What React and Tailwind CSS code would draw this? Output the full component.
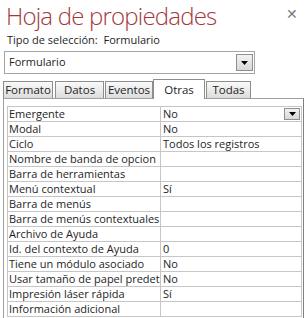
import React from "react";

const rows = [
  ["Emergente", "No", true],
  ["Modal", "No"],
  ["Ciclo", "Todos los registros"],
  ["Nombre de banda de opcion", ""],
  ["Barra de herramientas", ""],
  ["Menú contextual", "Sí"],
  ["Barra de menús", ""],
  ["Barra de menús contextuales", ""],
  ["Archivo de Ayuda", ""],
  ["Id. del contexto de Ayuda", "0"],
  ["Tiene un módulo asociado", "No"],
  ["Usar tamaño de papel predet", "No"],
  ["Impresión láser rápida", "Sí"],
  ["Información adicional", ""],
];

const tabs = [
  ["Formato", "w-[50px]"],
  ["Datos", "w-[49px] ml-[2px]"],
  ["Eventos", "w-[48px] ml-[1px]"],
  ["Otras", "w-[52px]", true],
  ["Todas", "w-[45px] ml-[1px]"],
];

function DropButton({ className }) {
  return (
    <div
      className={
        "flex items-center justify-center border border-[#8e8f8f] bg-gradient-to-b from-[#f2f2f2] to-[#d8d8d8] " +
        className
      }
    >
      <svg width="7" height="4" viewBox="0 0 7 4">
        <path d="M0 0h7L3.5 4z" fill="#000" />
      </svg>
    </div>
  );
}

export default function App() {
  return (
    <div className="w-[307px] h-[318px] bg-white overflow-hidden font-['Open_Sans',sans-serif] text-[#1e1e1e]">
      <div className="flex items-start justify-between pl-[6px] pr-[9px] h-[32px]">
        <h1 className="text-[24px] font-light leading-[32px] text-[#a4373a] tracking-[-0.8px]">
          Hoja de propiedades
        </h1>
        <span className="text-[#7a7a7a] text-[14px] leading-none mt-[7px]">✕</span>
      </div>
      <div className="pl-[7px] text-[11px] leading-[16px] h-[17px]">
        Tipo de selección:&nbsp;&nbsp;Formulario
      </div>
      <div className="ml-[4px] mt-[2px] w-[251px] h-[23px] border border-[#a5a5a5] flex items-center justify-between pl-[4px] pr-[1px]">
        <span className="text-[11px]">Formulario</span>
        <DropButton className="w-[17px] h-[17px]" />
      </div>
      <div className="flex items-end ml-[3px] mt-[5px] h-[19px]">
        {tabs.map(([t, w, sel]) => (
          <div
            key={t}
            className={
              w +
              " text-[11.5px] flex justify-center border border-[#8d8d8d] " +
              (sel
                ? "h-[20px] bg-white border-b-0 relative z-10 -mb-px items-start pt-px"
                : "h-[17px] bg-gradient-to-b from-[#fafafa] to-[#dcdcdc] items-center border-b-0")
            }
          >
            {t}
          </div>
        ))}
      </div>
      <div className="ml-[3px] w-[301px] h-[230px] border border-[#a0a0a0] border-r-[#7f7f7f] pt-[7px] pl-[3px]">
        <div className="w-[295px] border border-[#c6c6c6] border-b-0">
          {rows.map(([label, value, drop]) => (
            <div key={label} className="flex h-[15px] border-b border-[#c6c6c6] text-[11px] leading-[14px]">
              <div className="w-[153px] pl-[1px] border-r border-[#c6c6c6] overflow-hidden whitespace-nowrap">
                {label}
              </div>
              <div className="flex-1 pl-[2px] flex justify-between">
                <span>{value}</span>
                {drop && <DropButton className="w-[16px] h-[12px] mt-[1px] mr-px" />}
              </div>
            </div>
          ))}
        </div>
      </div>
    </div>
  );
}
